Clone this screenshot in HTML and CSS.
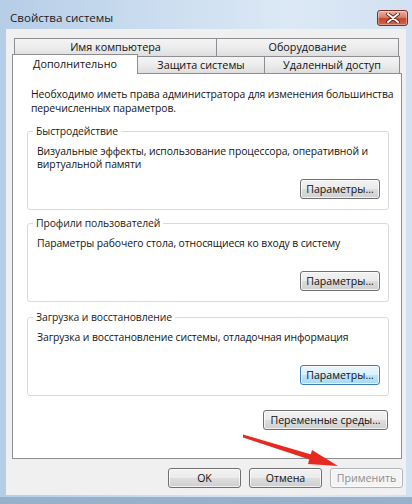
FILE: index.html
```html
<!DOCTYPE html>
<html lang="ru">
<head>
    <meta charset="UTF-8">
    <meta name="viewport" content="width=device-width, initial-scale=1.0">
    <title>Свойства системы</title>
    <link rel="stylesheet" href="styles.css">
</head>
<body>
    <div class="window">
        <div class="titlebar">
            <span class="title">Свойства системы</span>
            <button class="close" title="Закрыть">
                <svg width="14" height="10" viewBox="0 0 14 10">
                    <path d="M2 1 L12 9 M12 1 L2 9" stroke="#5a1a10" stroke-width="3.6" stroke-linecap="round"/>
                    <path d="M2 1 L12 9 M12 1 L2 9" stroke="#ffffff" stroke-width="2" stroke-linecap="round"/>
                </svg>
            </button>
        </div>

        <div class="client">
            <div class="tab-row back">
                <div class="tab computer">Имя компьютера</div>
                <div class="tab hardware">Оборудование</div>
            </div>
            <div class="tab-row front">
                <div class="tab active">Дополнительно</div>
                <div class="tab protection">Защита системы</div>
                <div class="tab remote">Удаленный доступ</div>
            </div>

            <div class="panel">
                <p class="note">Необходимо иметь права администратора для изменения большинства перечисленных параметров.</p>

                <fieldset class="group first">
                    <legend>Быстродействие</legend>
                    <p>Визуальные эффекты, использование процессора, оперативной и виртуальной памяти</p>
                    <button class="btn">Параметры...</button>
                </fieldset>

                <fieldset class="group">
                    <legend>Профили пользователей</legend>
                    <p>Параметры рабочего стола, относящиеся ко входу в систему</p>
                    <button class="btn">Параметры...</button>
                </fieldset>

                <fieldset class="group last">
                    <legend>Загрузка и восстановление</legend>
                    <p>Загрузка и восстановление системы, отладочная информация</p>
                    <button class="btn focused">Параметры...</button>
                </fieldset>

                <div class="env">
                    <button class="btn env-btn">Переменные среды...</button>
                </div>
            </div>

            <div class="footer">
                <button class="btn dlg">OK</button>
                <button class="btn dlg">Отмена</button>
                <button class="btn dlg" disabled>Применить</button>
            </div>
        </div>

        <svg class="arrow" width="412" height="504" viewBox="0 0 412 504">
            <polygon points="243,434.5 243,437.5 311,460 313,455" fill="#e62a22"/>
            <polygon points="338,466 312,450 308,464" fill="#e62a22"/>
        </svg>
    </div>
</body>
</html>
```

FILE: styles.css
```css
body {
    margin: 0;
    font-family: 'Open Sans', 'Noto Sans', sans-serif;
    font-size: 10.4px;
    letter-spacing: -0.1px;
    color: #141414;
}
.window {
    position: relative;
    width: 412px;
    height: 504px;
    box-sizing: border-box;
    padding: 0 6px 9px 6px;
    display: flex;
    flex-direction: column;
    background:
        linear-gradient(to bottom, transparent 497px, #97b1ca 497px),
        linear-gradient(to right, #b6cde7 0%, #c9dcef 35%, #dce8f5 70%, #d2e1f1 100%);
}
.titlebar {
    height: 29px;
    box-sizing: border-box;
    padding: 10px 0 0 4px;
    display: flex;
    justify-content: space-between;
    align-items: flex-start;
}
.title {
    font-size: 11.6px;
    letter-spacing: 0;
    line-height: 15px;
    color: #1b1b1b;
}
.close {
    width: 31px;
    height: 16px;
    margin-right: -2px;
    padding: 0;
    border: 1px solid #7a3026;
    border-radius: 3px;
    background: linear-gradient(to bottom, #eab0a3 0%, #d9806b 45%, #c5462d 55%, #d2664c 100%);
    box-shadow: inset 0 0 0 1px rgba(255, 255, 255, 0.35);
    display: flex;
    justify-content: center;
    align-items: center;
}
.client {
    flex: 1;
    background: #f0f0f0;
    padding: 9px 4px 0 6px;
    display: flex;
    flex-direction: column;
}
.tab-row {
    display: flex;
    align-items: flex-start;
}
.tab-row.back {
    margin-left: 2px;
    height: 18px;
}
.tab-row.front {
    height: 17px;
}
.tab {
    box-sizing: border-box;
    border: 1px solid #8c8e94;
    border-bottom: none;
    background: linear-gradient(to bottom, #f4f4f4 0%, #ececec 50%, #dedede 100%);
    text-align: center;
    line-height: 16px;
    font-size: 10.8px;
    letter-spacing: 0;
    color: #111;
}
.tab + .tab {
    margin-left: -1px;
}
.back .tab {
    height: 18px;
}
.front .tab {
    height: 17px;
}
.computer {
    width: 203px;
}
.hardware {
    width: 183px;
}
.tab.active {
    position: relative;
    z-index: 1;
    width: 126px;
    height: 20px;
    margin-top: -2px;
    background: #ffffff;
    line-height: 18px;
}
.protection {
    width: 128px;
}
.remote {
    width: 136px;
}
.panel {
    background: #ffffff;
    border: 1px solid #8c8e94;
    padding: 13px 12px 28px 14px;
}
.note {
    margin: 0 -12px 0 0;
    padding-left: 4px;
    line-height: 14px;
}
.group {
    margin: 9px 0 0 0;
    padding: 7px 1px 10px 9px;
    border: 1px solid #d5dbe0;
    border-radius: 3px;
    height: 86px;
    box-sizing: border-box;
    display: flex;
    flex-direction: column;
    min-inline-size: 0;
}
.group + .group {
    margin-top: 6px;
}
.group.last {
    margin-top: 8px;
}
.group legend {
    margin-left: -4px;
    padding: 0 3px;
    line-height: 14px;
    color: #1b1b1b;
}
.group p {
    margin: 0;
    line-height: 13px;
}
.group .btn {
    margin-top: auto;
    margin-right: 7px;
    align-self: flex-end;
}
.btn {
    font-family: inherit;
    font-size: 10.6px;
    letter-spacing: 0;
    color: #111;
    width: 80px;
    height: 20px;
    padding: 0;
    border: 1px solid #707070;
    border-radius: 3px;
    background: linear-gradient(to bottom, #f2f2f2 0%, #ebebeb 49%, #dddddd 51%, #cfcfcf 100%);
    box-shadow: inset 0 0 0 1px rgba(255, 255, 255, 0.7);
}
.btn.focused {
    border-color: #3c7fb1;
    background: linear-gradient(to bottom, #eaf6fd 0%, #d9f0fc 49%, #bee6fd 51%, #a7d9f5 100%);
}
.env {
    margin-top: 14px;
    display: flex;
    justify-content: flex-end;
    padding-right: 1px;
}
.env-btn {
    width: 125px;
}
.footer {
    display: flex;
    justify-content: flex-end;
    gap: 8px;
    padding-top: 9px;
    margin-right: -1px;
}
.dlg {
    width: 73px;
}
.dlg:disabled {
    color: #8d8d8d;
    border-color: #b0b4b8;
    background: #f4f4f4;
}
.arrow {
    position: absolute;
    top: 0;
    left: 0;
    pointer-events: none;
}
```
